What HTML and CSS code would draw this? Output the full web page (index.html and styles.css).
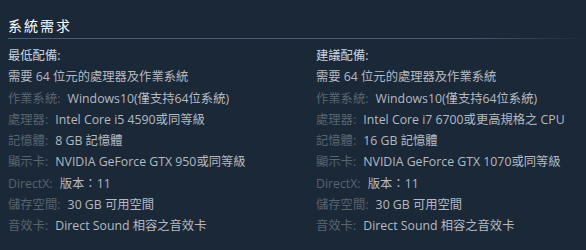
FILE: index.html
```html
<!DOCTYPE html>
<html lang="zh-Hant">
<head>
<meta charset="utf-8">
<link rel="stylesheet" href="styles.css">
</head>
<body>
<div class="sysreq">
  <h2 class="title">系統需求</h2>
  <div class="cols">
    <ul class="col">
      <li class="head">最低配備:</li>
      <li>需要 64 位元的處理器及作業系統</li>
      <li><span class="lbl">作業系統:</span> Windows10(僅支持64位系統)</li>
      <li><span class="lbl">處理器:</span> Intel Core i5 4590或同等級</li>
      <li><span class="lbl">記憶體:</span> 8 GB 記憶體</li>
      <li><span class="lbl">顯示卡:</span> NVIDIA GeForce GTX 950或同等級</li>
      <li><span class="lbl">DirectX:</span> 版本：11</li>
      <li><span class="lbl">儲存空間:</span> 30 GB 可用空間</li>
      <li><span class="lbl">音效卡:</span> Direct Sound 相容之音效卡</li>
    </ul>
    <ul class="col">
      <li class="head">建議配備:</li>
      <li>需要 64 位元的處理器及作業系統</li>
      <li><span class="lbl">作業系統:</span> Windows10(僅支持64位系統)</li>
      <li><span class="lbl">處理器:</span> Intel Core i7 6700或更高規格之 CPU</li>
      <li><span class="lbl">記憶體:</span> 16 GB 記憶體</li>
      <li><span class="lbl">顯示卡:</span> NVIDIA GeForce GTX 1070或同等級</li>
      <li><span class="lbl">DirectX:</span> 版本：11</li>
      <li><span class="lbl">儲存空間:</span> 30 GB 可用空間</li>
      <li><span class="lbl">音效卡:</span> Direct Sound 相容之音效卡</li>
    </ul>
  </div>
</div>
</body>
</html>
```

FILE: styles.css
```css
html, body {
  margin: 0;
  padding: 0;
  background: #1b2838;
}
body {
  font-family: "Open Sans", "Noto Sans CJK TC", sans-serif;
  color: #b4bac0;
  font-size: 12.3px;
  width: 586px;
  height: 250px;
  overflow: hidden;
}
.sysreq {
  padding: 16px 0 0 8px;
}
.title {
  margin: 0;
  font-size: 14px;
  font-weight: normal;
  letter-spacing: 2px;
  color: #ffffff;
  line-height: 20px;
  padding-bottom: 2px;
  border-bottom: 1px solid transparent;
  border-image: linear-gradient(to right, #3e5f77 0%, #3e5f77 80%, #1b2838 100%) 1;
}
.cols {
  display: grid;
  grid-template-columns: 308px 1fr;
  padding-top: 6px;
}
.col {
  list-style: none;
  margin: 0;
  padding: 0;
}
.col li {
  line-height: 21.25px;
  white-space: nowrap;
}
.col .head {
  color: #c6d4df;
}
.lbl {
  color: #58646f;
  margin-right: 4px;
}
```
